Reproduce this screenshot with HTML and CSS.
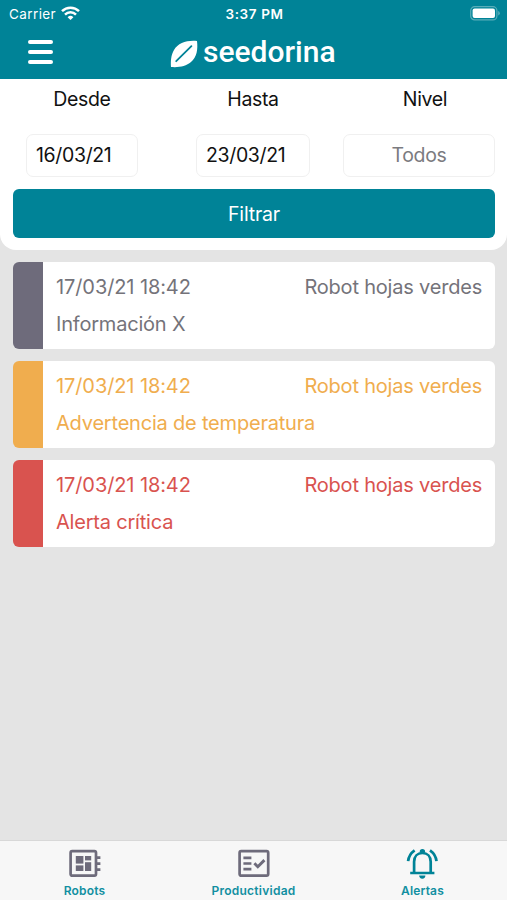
FILE: index.html
```html
<!DOCTYPE html>
<html lang="es">
<head>
  <meta charset="UTF-8">
  <meta name="viewport" content="width=device-width, initial-scale=1.0">
  <title>Seedorina - Alertas</title>
  <link rel="stylesheet" href="styles.css">
</head>
<body>
  <header>
    <!-- Status bar -->
    <div class="status-bar">
      <div class="carrier">
        <span>Carrier</span>
        <svg width="19" height="15" viewBox="0 0 19 15" fill="none" stroke="#fff" stroke-width="2.5">
          <path d="M1 5.2a12.2 12.2 0 0 1 17 0"/>
          <path d="M4 8.6a7.8 7.8 0 0 1 11 0"/>
          <path d="M9.5 14 6.6 11.2a4.2 4.2 0 0 1 5.8 0z" fill="#fff" stroke="none"/>
        </svg>
      </div>
      <span class="clock">3:37 PM</span>
      <svg class="battery" width="30" height="15" viewBox="0 0 30 15">
        <rect x="0.7" y="0.7" width="26.2" height="13.2" rx="4" fill="none" stroke="#59adb9" stroke-width="1.2"/>
        <rect x="2.6" y="2.6" width="22.4" height="9.4" rx="2" fill="#fff"/>
        <path d="M28.2 5v4.6q1.6-.6 1.6-2.3t-1.6-2.3z" fill="#59adb9"/>
      </svg>
    </div>

    <!-- Menu and logo -->
    <div class="nav-bar">
      <button class="menu" aria-label="Menú">
        <span></span><span></span><span></span>
      </button>
      <div class="logo">
        <svg width="28" height="28" viewBox="0 0 28 28">
          <path d="M27 1C17 0 8 3 4 10 1 15 .6 21 1 27c8 .6 15-.6 20-5C27 17 28 9 27 1z" fill="#fff"/>
          <path d="M6.2 21.2 21.4 6.2" stroke="#008397" stroke-width="1.8" stroke-linecap="round"/>
        </svg>
        <span>seedorina</span>
      </div>
    </div>
  </header>

  <!-- Filters -->
  <section class="filters">
    <div class="fields">
      <div class="field">
        <label>Desde</label>
        <div class="input date-from">16/03/21</div>
      </div>
      <div class="field">
        <label>Hasta</label>
        <div class="input date-to">23/03/21</div>
      </div>
      <div class="field">
        <label>Nivel</label>
        <div class="input level">Todos</div>
      </div>
    </div>
    <button class="filter-button">Filtrar</button>
  </section>

  <!-- Alert list -->
  <main>
    <div class="alert info">
      <div class="row"><span class="date">17/03/21 18:42</span><span class="robot">Robot hojas verdes</span></div>
      <div class="message">Información X</div>
    </div>
    <div class="alert warning">
      <div class="row"><span class="date">17/03/21 18:42</span><span class="robot">Robot hojas verdes</span></div>
      <div class="message">Advertencia de temperatura</div>
    </div>
    <div class="alert critical">
      <div class="row"><span class="date">17/03/21 18:42</span><span class="robot">Robot hojas verdes</span></div>
      <div class="message">Alerta crítica</div>
    </div>
  </main>

  <!-- Tabs -->
  <nav>
    <a class="tab">
      <svg width="34" height="34" viewBox="0 0 34 34" fill="#6e6b7b">
        <rect x="2.6" y="5.1" width="25.4" height="24.6" rx="1.6" fill="none" stroke="#6e6b7b" stroke-width="2.7"/>
        <rect x="7.8" y="10" width="7.6" height="7.6"/>
        <rect x="17" y="10" width="6.2" height="4.4"/>
        <rect x="7.8" y="19.4" width="7.6" height="5.6"/>
        <rect x="17" y="16.2" width="6.2" height="8.8"/>
        <path d="M28.4 10.2h4v2.7h-4zM28.4 16.2h4v2.7h-4zM28.4 22.2h4v2.7h-4z"/>
      </svg>
      <span>Robots</span>
    </a>
    <a class="tab">
      <svg width="34" height="34" viewBox="0 0 34 34" fill="none" stroke="#6e6b7b" stroke-width="2.7">
        <rect x="2.6" y="5.1" width="28.6" height="24.6" rx="1.6"/>
        <path d="M6.4 11.8h8M6.4 17.5h8M6.4 23.2h8"/>
        <path d="m17.4 17.3 3.4 3.4 6.6-6.6" stroke-width="2.9"/>
      </svg>
      <span class="wide">Productividad</span>
    </a>
    <a class="tab">
      <svg width="34" height="34" viewBox="0 0 34 34" fill="none" stroke="#008397" stroke-width="2.7">
        <path d="M4.2 27h24.2M8.1 26.4V15.8c0-5.4 3.4-8.8 8.3-8.8s8.3 3.4 8.3 8.8v10.6"/>
        <path d="M13.7 6.8V5.7a2.7 2.7 0 0 1 5.4 0v1.1z" fill="#008397" stroke="none"/>
        <path d="M13.2 29.6h6.2a3.1 3.1 0 0 1-6.2 0z" fill="#008397" stroke="none"/>
        <path d="M8.6 4.3Q2.8 8.4 2.1 15.2M24 4.3q5.8 4.1 6.5 10.9"/>
      </svg>
      <span>Alertas</span>
    </a>
  </nav>
</body>
</html>
```
FILE: styles.css
```css
* {
  box-sizing: border-box;
}
body {
  display: flex;
  flex-direction: column;
  height: 900px;
  margin: 0;
  font-family: Inter, "Liberation Sans", sans-serif;
  font-size: 19.5px;
  background: #e4e4e4;
  color: #111;
}
svg {
  display: block;
  flex-shrink: 0;
}
header {
  height: 79px;
  background: #008397;
  color: #fff;
}
.status-bar {
  display: grid;
  grid-template-columns: 1fr auto 1fr;
  align-items: center;
  height: 27px;
  padding: 0 7px 0 9px;
  font-size: 13.5px;
}
.carrier {
  display: flex;
  align-items: center;
  gap: 5px;
  letter-spacing: 0.4px;
}
.clock {
  font-size: 13.5px;
  font-weight: 600;
  letter-spacing: 0.6px;
}
.battery {
  justify-self: end;
}
.nav-bar {
  display: grid;
  grid-template-columns: 170px 1fr;
  align-items: center;
  height: 52px;
  padding-bottom: 2px;
}
.menu {
  display: flex;
  flex-direction: column;
  gap: 6px;
  width: 25px;
  margin: -1px 0 0 28px;
  padding: 0;
  border: 0;
  background: none;
}
.menu span {
  height: 4px;
  border-radius: 2px;
  background: #fff;
}
.logo {
  display: flex;
  align-items: center;
  gap: 5px;
}
.logo svg {
  margin-top: 3px;
}
.logo span {
  font-family: Roboto, sans-serif;
  font-size: 30px;
  font-weight: 500;
  line-height: 34px;
}
.filters {
  height: 171px;
  padding: 0 12px 12px 13px;
  border-radius: 0 0 16px 16px;
  background: #fff;
  letter-spacing: -0.35px;
}
.fields {
  display: grid;
  grid-template-columns: 138px 204px 140px;
  height: 110px;
}
.field {
  display: flex;
  flex-direction: column;
  align-items: center;
}
.field label {
  height: 55px;
  line-height: 40px;
}
.input {
  height: 43px;
  border: 1.5px solid #f0f0f0;
  border-radius: 7px;
  line-height: 41px;
}
.date-from,
.date-to {
  width: 112px;
  padding-left: 9px;
}
.date-to {
  width: 114px;
}
.level {
  align-self: flex-end;
  width: 152px;
  text-align: center;
  color: #7b7b80;
}
.filter-button {
  display: block;
  width: 100%;
  height: 49px;
  padding: 0;
  border: 0;
  border-radius: 6px;
  background: #008397;
  color: #fff;
  font: inherit;
  letter-spacing: -0.2px;
}
main {
  flex: 1;
  display: flex;
  flex-direction: column;
  gap: 12px;
  padding: 12px 12px 0 13px;
}
.alert {
  height: 87px;
  padding: 7px 13px 0;
  border-left: 30px solid;
  border-radius: 6px;
  background: #fff;
  font-size: 20px;
  letter-spacing: -0.2px;
  line-height: 37px;
}
.row {
  display: flex;
  justify-content: space-between;
}
.date {
  letter-spacing: -0.1px;
}
.info {
  border-color: #6e6b7b;
  color: #74737a;
}
.warning {
  border-color: #f0ad4e;
  color: #f0ad4e;
}
.critical {
  border-color: #d9534f;
  color: #d9534f;
}
nav {
  display: grid;
  grid-template-columns: repeat(3, 1fr);
  height: 60px;
  border-top: 1px solid #d8d8d8;
  background: #f7f7f7;
}
.tab {
  display: flex;
  flex-direction: column;
  align-items: center;
  padding-top: 5px;
  color: #118fa1;
  font-size: 12px;
  font-weight: 600;
  line-height: 22px;
  letter-spacing: 0.15px;
}
.wide {
  letter-spacing: 0.25px;
}
```
